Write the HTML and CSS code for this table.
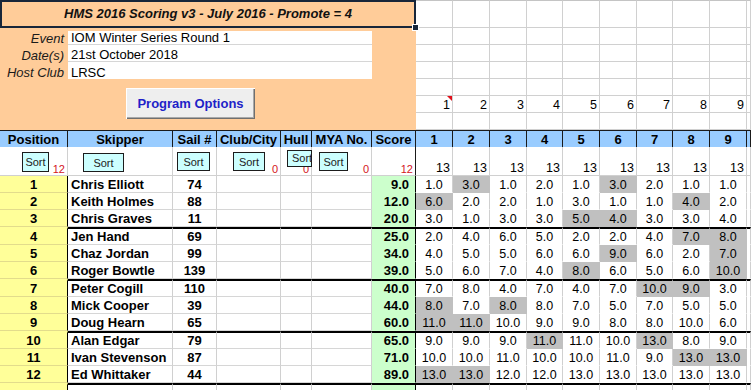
FILE: index.html
```html
<!DOCTYPE html>
<html>
<head>
<meta charset="utf-8">
<link rel="stylesheet" href="styles.css">
</head>
<body>
<div class="sheet">
  <div class="top">
    <div class="panel">
      <div class="title">HMS 2016 Scoring v3 - July 2016 - Promote = 4<span class="handle"></span></div>
      <div class="info">
        <div class="lbl">Event</div><div class="val first">IOM Winter Series Round 1</div>
        <div class="lbl">Date(s)</div><div class="val">21st October 2018</div>
        <div class="lbl">Host Club</div><div class="val last">LRSC</div>
      </div>
      <button class="prog">Program Options</button>
    </div>
    <div class="tg">
      <div class="f"></div><div class="f"></div><div class="f"></div><div class="f"></div><div class="f"></div><div class="f"></div><div class="f"></div><div class="f"></div><div class="f"></div><div class="f"></div>
      <div></div><div></div><div></div><div></div><div></div><div></div><div></div><div></div><div></div><div></div>
      <div></div><div></div><div></div><div></div><div></div><div></div><div></div><div></div><div></div><div></div>
      <div></div><div></div><div></div><div></div><div></div><div></div><div></div><div></div><div></div><div></div>
      <div></div><div></div><div></div><div></div><div></div><div></div><div></div><div></div><div></div><div></div>
      <div class="n">1<span class="cmt"></span></div><div class="n">2</div><div class="n">3</div><div class="n">4</div><div class="n">5</div><div class="n">6</div><div class="n">7</div><div class="n">8</div><div class="n">9</div><div class="n"></div>
      <div></div><div></div><div></div><div></div><div></div><div></div><div></div><div></div><div></div><div></div>
    </div>
  </div>

  <div class="row head">
    <div>Position</div><div>Skipper</div><div>Sail #</div><div>Club/City</div><div>Hull</div><div>MYA No.</div><div class="hs">Score</div>
    <div>1</div><div>2</div><div>3</div><div>4</div><div>5</div><div>6</div><div>7</div><div>8</div><div>9</div><div></div>
  </div>

  <div class="row srt">
    <div><span class="sb b-pos">Sort</span><span class="cnt">12</span></div>
    <div><span class="sb b-sk">Sort</span></div>
    <div><span class="sb b-sn">Sort</span></div>
    <div><span class="sb b-cl">Sort</span><span class="cnt">0</span></div>
    <div><span class="cnt">0</span><span class="sb b-hu">Sort</span></div>
    <div><span class="sb b-my">Sort</span><span class="cnt">0</span></div>
    <div class="ss"><span class="cnt">12</span></div>
    <div>13</div><div>13</div><div>13</div><div>13</div><div>13</div><div>13</div><div>13</div><div>13</div><div>13</div><div></div>
  </div>

  <div class="row d">
    <div class="p">1</div><div class="k">Chris Elliott</div><div class="s">74</div><div class="e"></div><div class="e"></div><div class="e"></div><div class="sc">9.0</div>
    <div class="v">1.0</div><div class="v g">3.0</div><div class="v">1.0</div><div class="v">2.0</div><div class="v">1.0</div><div class="v g">3.0</div><div class="v">2.0</div><div class="v">1.0</div><div class="v">1.0</div><div class="v"></div>
  </div>
  <div class="row d">
    <div class="p">2</div><div class="k">Keith Holmes</div><div class="s">88</div><div class="e"></div><div class="e"></div><div class="e"></div><div class="sc">12.0</div>
    <div class="v g">6.0</div><div class="v">2.0</div><div class="v">2.0</div><div class="v">1.0</div><div class="v">3.0</div><div class="v">1.0</div><div class="v">1.0</div><div class="v g">4.0</div><div class="v">2.0</div><div class="v"></div>
  </div>
  <div class="row d">
    <div class="p">3</div><div class="k">Chris Graves</div><div class="s">11</div><div class="e"></div><div class="e"></div><div class="e"></div><div class="sc">20.0</div>
    <div class="v">3.0</div><div class="v">1.0</div><div class="v">3.0</div><div class="v">3.0</div><div class="v g">5.0</div><div class="v g">4.0</div><div class="v">3.0</div><div class="v">3.0</div><div class="v">4.0</div><div class="v"></div>
  </div>
  <div class="row d t">
    <div class="p">4</div><div class="k">Jen Hand</div><div class="s">69</div><div class="e"></div><div class="e"></div><div class="e"></div><div class="sc">25.0</div>
    <div class="v">2.0</div><div class="v">4.0</div><div class="v">6.0</div><div class="v">5.0</div><div class="v">2.0</div><div class="v">2.0</div><div class="v">4.0</div><div class="v g">7.0</div><div class="v g">8.0</div><div class="v"></div>
  </div>
  <div class="row d">
    <div class="p">5</div><div class="k">Chaz Jordan</div><div class="s">99</div><div class="e"></div><div class="e"></div><div class="e"></div><div class="sc">34.0</div>
    <div class="v">4.0</div><div class="v">5.0</div><div class="v">5.0</div><div class="v">6.0</div><div class="v">6.0</div><div class="v g">9.0</div><div class="v">6.0</div><div class="v">2.0</div><div class="v g">7.0</div><div class="v"></div>
  </div>
  <div class="row d">
    <div class="p">6</div><div class="k">Roger Bowtle</div><div class="s">139</div><div class="e"></div><div class="e"></div><div class="e"></div><div class="sc">39.0</div>
    <div class="v">5.0</div><div class="v">6.0</div><div class="v">7.0</div><div class="v">4.0</div><div class="v g">8.0</div><div class="v">6.0</div><div class="v">5.0</div><div class="v">6.0</div><div class="v g">10.0</div><div class="v"></div>
  </div>
  <div class="row d t">
    <div class="p">7</div><div class="k">Peter Cogill</div><div class="s">110</div><div class="e"></div><div class="e"></div><div class="e"></div><div class="sc">40.0</div>
    <div class="v">7.0</div><div class="v">8.0</div><div class="v">4.0</div><div class="v">7.0</div><div class="v">4.0</div><div class="v">7.0</div><div class="v g">10.0</div><div class="v g">9.0</div><div class="v">3.0</div><div class="v"></div>
  </div>
  <div class="row d">
    <div class="p">8</div><div class="k">Mick Cooper</div><div class="s">39</div><div class="e"></div><div class="e"></div><div class="e"></div><div class="sc">44.0</div>
    <div class="v g">8.0</div><div class="v">7.0</div><div class="v g">8.0</div><div class="v">8.0</div><div class="v">7.0</div><div class="v">5.0</div><div class="v">7.0</div><div class="v">5.0</div><div class="v">5.0</div><div class="v"></div>
  </div>
  <div class="row d">
    <div class="p">9</div><div class="k">Doug Hearn</div><div class="s">65</div><div class="e"></div><div class="e"></div><div class="e"></div><div class="sc">60.0</div>
    <div class="v g">11.0</div><div class="v g">11.0</div><div class="v">10.0</div><div class="v">9.0</div><div class="v">9.0</div><div class="v">8.0</div><div class="v">8.0</div><div class="v">10.0</div><div class="v">6.0</div><div class="v"></div>
  </div>
  <div class="row d t">
    <div class="p">10</div><div class="k">Alan Edgar</div><div class="s">79</div><div class="e"></div><div class="e"></div><div class="e"></div><div class="sc">65.0</div>
    <div class="v">9.0</div><div class="v">9.0</div><div class="v">9.0</div><div class="v g">11.0</div><div class="v">11.0</div><div class="v">10.0</div><div class="v g">13.0</div><div class="v">8.0</div><div class="v">9.0</div><div class="v"></div>
  </div>
  <div class="row d">
    <div class="p">11</div><div class="k">Ivan Stevenson</div><div class="s">87</div><div class="e"></div><div class="e"></div><div class="e"></div><div class="sc">71.0</div>
    <div class="v">10.0</div><div class="v">10.0</div><div class="v">11.0</div><div class="v">10.0</div><div class="v">10.0</div><div class="v">11.0</div><div class="v">9.0</div><div class="v g">13.0</div><div class="v g">13.0</div><div class="v"></div>
  </div>
  <div class="row d">
    <div class="p">12</div><div class="k">Ed Whittaker</div><div class="s">44</div><div class="e"></div><div class="e"></div><div class="e"></div><div class="sc">89.0</div>
    <div class="v g">13.0</div><div class="v g">13.0</div><div class="v">12.0</div><div class="v">12.0</div><div class="v">13.0</div><div class="v">13.0</div><div class="v">13.0</div><div class="v">13.0</div><div class="v">13.0</div><div class="v"></div>
  </div>
  <div class="row d t">
    <div class="p"></div><div class="k"></div><div class="s"></div><div class="e"></div><div class="e"></div><div class="e"></div><div class="sc"></div>
    <div class="v"></div><div class="v"></div><div class="v"></div><div class="v"></div><div class="v"></div><div class="v"></div><div class="v"></div><div class="v"></div><div class="v"></div><div class="v"></div>
  </div>
</div>
</body>
</html>
```

FILE: styles.css
```css
* { box-sizing: border-box; margin: 0; padding: 0; }
html, body { width: 751px; height: 390px; overflow: hidden; background: #fff; }
body { font-family: "Liberation Sans", Arial, sans-serif; font-size: 13px; color: #000; }

.sheet { width: 751px; height: 390px; overflow: hidden; }

/* ---------- top area ---------- */
.top { display: flex; height: 130px; }
.panel { flex: none; width: 416px; height: 130px; background: #ffcc99; display: flex; flex-direction: column; align-items: flex-start; }
.title { position: relative; width: 416px; height: 28px; border: 2px solid #18263a; font-weight: bold; font-style: italic; text-align: center; line-height: 24px; color: #111; }
.handle { position: absolute; right: -5px; bottom: -5px; width: 7px; height: 7px; background: #18263a; border: 1px solid #fff; }

.info { display: grid; grid-template-columns: 68px 304px; grid-template-rows: repeat(3, 17px); }
.lbl { display: flex; align-items: flex-end; justify-content: flex-end; padding-right: 4px; font-style: italic; line-height: 13px; color: #1a1a1a; }
.val { display: flex; align-items: flex-end; padding-left: 3px; background: #fff; border-bottom: 1px solid #d6d6d6; line-height: 13px; }
.val.first { margin-top: 3px; }
.val.last { border-bottom: 0; }

.prog { margin: 9px 0 0 126px; width: 129px; height: 31px; font-family: "Liberation Sans", Arial, sans-serif; font-size: 13px; font-weight: bold; color: #1f1fc8; background: #eeeeee; border: 0; box-shadow: inset 1px 1px 0 #ffffff, inset -1px -1px 0 #6f6f6f, inset -2px -2px 0 #a8a8a8; padding-bottom: 1px; }

.tg { display: grid; grid-template-columns: 37px 37px 37px 36px 37px 37px 36px 37px 37px 4px; grid-template-rows: 28px repeat(6, 17px); }
.tg > div { border-right: 1px solid #d0d0d0; border-bottom: 1px solid #d0d0d0; }
.tg > .f { border-top: 1px solid #c4c4c4; }
.tg > .n { position: relative; display: flex; align-items: flex-end; justify-content: flex-end; padding-right: 2px; font-size: 12.5px; line-height: 14px; }
.cmt { position: absolute; top: 0; right: 0; width: 0; height: 0; border-top: 5px solid #e0101a; border-left: 5px solid transparent; }

/* ---------- table rows ---------- */
.row { display: grid; grid-template-columns: 68px 105px 44px 64px 31px 60px 44px 37px 37px 37px 36px 37px 37px 36px 37px 37px 4px; }
.row > div { min-width: 0; overflow: hidden; }

.head { height: 17px; }
.head > div { display: flex; align-items: flex-end; justify-content: center; background: #99ccff; border-top: 1px solid #1a1a1a; border-right: 1px solid #1a1a1a; font-weight: bold; line-height: 14px; white-space: nowrap; }

.srt { height: 29px; }
.srt > div { position: relative; display: flex; align-items: flex-end; justify-content: flex-end; padding-right: 2px; border-right: 1px solid #d0d0d0; border-bottom: 1px solid #d0d0d0; font-size: 12.5px; line-height: 14px; }
.srt > div:nth-child(5) { overflow: visible; }
.srt > .ss { border-right-color: #1a1a1a; }
.cnt { color: #d4141c; font-size: 11px; line-height: 12px; }
.sb { position: absolute; display: flex; align-items: center; justify-content: center; background: #ccffff; border: 1px solid #1c1c1c; font-size: 11px; color: #222; line-height: 12px; white-space: nowrap; overflow: hidden; }
.b-pos { left: 22px; top: 5px; width: 27px; height: 20px; }
.b-sk { left: 15px; top: 6px; width: 41px; height: 19px; }
.b-sn { left: 4px; top: 5px; width: 33px; height: 19px; }
.b-cl { left: 16px; top: 5px; width: 32px; height: 19px; }
.b-hu { left: 6px; top: 3px; width: 25px; height: 17px; align-items: flex-start; justify-content: flex-start; padding: 1px 0 0 4px; }
.b-my { left: 7px; top: 5px; width: 29px; height: 19px; }

.d { height: 17px; }
.d.t { height: 18px; }
.d > div { display: flex; align-items: flex-end; justify-content: center; border-right: 1px solid #d0d0d0; border-bottom: 1px solid #d6d6d6; line-height: 14px; white-space: nowrap; }
.d.t > div { border-top: 2px solid #000; }

.d > .p { background: #ffff99; font-weight: bold; border-right-color: #000; border-bottom-color: #e2dc8c; }
.d.t > .p { border-top-color: transparent; }
.d > .k { justify-content: flex-start; padding-left: 3px; font-weight: bold; }
.d > .s { font-weight: bold; }
.d > .sc { justify-content: flex-end; padding-right: 6px; background: #ccffcc; font-weight: bold; border-right-color: #000; border-bottom-color: transparent; }
.d > .v { font-size: 12.5px; line-height: 13px; border-bottom-color: transparent; }
.d > .v.g { background: #c0c0c0; border-right-color: #c0c0c0; }
```
